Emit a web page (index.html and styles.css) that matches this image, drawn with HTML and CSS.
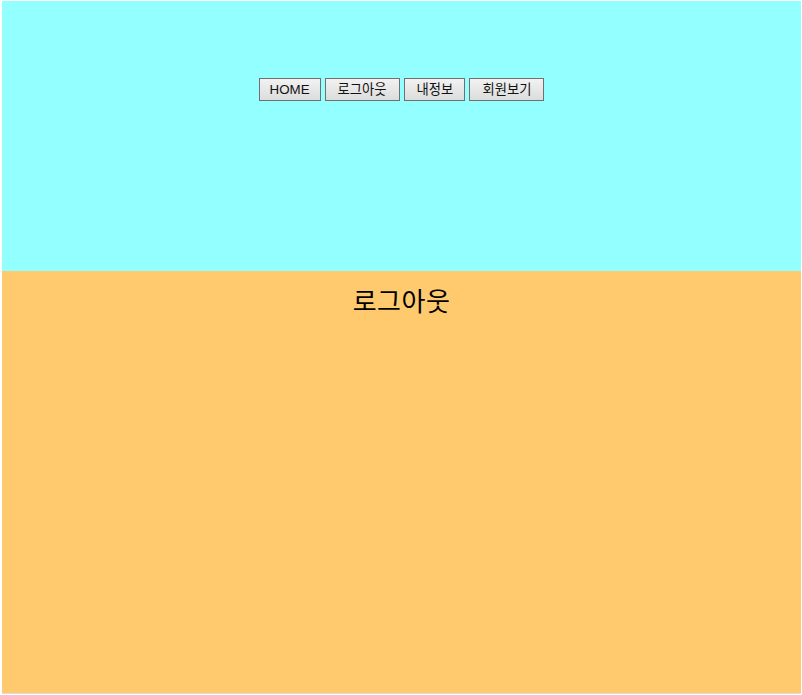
FILE: index.html
```html
<!DOCTYPE html>
<html lang="ko">
<head>
<meta charset="utf-8">
<title>로그아웃</title>
<link rel="stylesheet" href="styles.css">
</head>
<body>
<div class="page">
  <header class="top">
    <nav class="menu">
      <button class="btn">HOME</button>
      <button class="btn btn-ko">로그아웃</button>
      <button class="btn btn-ko btn-short">내정보</button>
      <button class="btn btn-ko">회원보기</button>
    </nav>
  </header>
  <main class="content">
    <h2 class="title">로그아웃</h2>
  </main>
</div>
</body>
</html>
```
FILE: styles.css
```css
html, body {
  margin: 0;
  padding: 0;
  background: #ffffff;
}
.page {
  margin: 1px 1px 0 2px;
  border-bottom: 1px solid #dddddd;
}
.top {
  background: #93ffff;
  height: 270px;
  box-sizing: border-box;
  padding-top: 77px;
}
.menu {
  display: flex;
  justify-content: center;
  gap: 4px;
}
.btn {
  font-family: "Liberation Sans", "Noto Sans CJK KR", sans-serif;
  font-size: 13.33px;
  color: #111111;
  height: 23px;
  padding: 0 10px;
  border: 1px solid #707070;
  border-radius: 0;
  background: linear-gradient(#f2f2f2, #dcdcdc);
  line-height: 21px;
}
.btn-ko {
  padding: 0 12px;
}
.btn-short {
  padding: 0 11px 0 12px;
}
.content {
  background: #ffca6e;
  height: 422px;
  box-sizing: border-box;
  padding-top: 16px;
  text-align: center;
}
.title {
  margin: 0;
  font-family: "Liberation Sans", "Noto Sans CJK KR", sans-serif;
  font-size: 26px;
  letter-spacing: 0.5px;
  font-weight: normal;
  color: #000000;
  line-height: 30px;
}
```
